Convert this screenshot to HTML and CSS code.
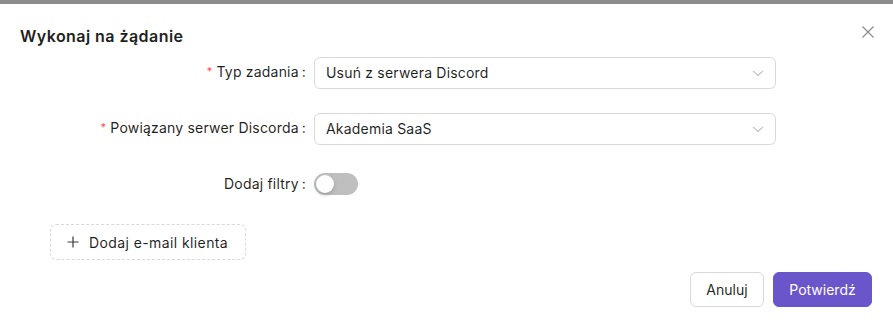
FILE: index.html
```html
<!DOCTYPE html>
<html lang="pl">
<head>
<meta charset="utf-8">
<title>Wykonaj na żądanie</title>
<link rel="stylesheet" href="styles.css">
</head>
<body>
<div class="strip"></div>
<div class="modal">
  <div class="header">
    <h2 class="title">Wykonaj na żądanie</h2>
    <button class="close" aria-label="Zamknij">
      <svg width="12" height="12" viewBox="0 0 12 12"><path d="M0.5 0.5 L11.5 11.5 M11.5 0.5 L0.5 11.5" stroke="#8c8c8c" stroke-width="1.2" fill="none"/></svg>
    </button>
  </div>
  <div class="form">
    <div class="row">
      <div class="label"><span class="req">*</span>Typ zadania<span class="colon">:</span></div>
      <div class="select"><span>Usuń z serwera Discord</span>
        <svg class="arrow" width="12" height="12" viewBox="0 0 12 12"><path d="M1 3.8 L6 8.5 L11 3.8" stroke="#bfbfbf" stroke-width="1.1" fill="none"/></svg>
      </div>
    </div>
    <div class="row">
      <div class="label"><span class="req">*</span>Powiązany serwer Discorda<span class="colon">:</span></div>
      <div class="select"><span>Akademia SaaS</span>
        <svg class="arrow" width="12" height="12" viewBox="0 0 12 12"><path d="M1 3.8 L6 8.5 L11 3.8" stroke="#bfbfbf" stroke-width="1.1" fill="none"/></svg>
      </div>
    </div>
    <div class="row">
      <div class="label">Dodaj filtry<span class="colon">:</span></div>
      <div class="ctrl"><span class="switch"><span class="knob"></span></span></div>
    </div>
    <button class="dashed">
      <svg width="12" height="12" viewBox="0 0 12 12"><path d="M6 0.5 V11.5 M0.5 6 H11.5" stroke="#3a3a3a" stroke-width="1.2" fill="none"/></svg>
      <span>Dodaj e-mail klienta</span>
    </button>
  </div>
  <div class="footer">
    <button class="btn cancel">Anuluj</button>
    <button class="btn primary">Potwierdź</button>
  </div>
</div>
</body>
</html>
```
FILE: styles.css
```css
* { box-sizing: border-box; }
html, body { margin: 0; padding: 0; background: #fff; }
body {
  font-family: "Inter", "Noto Sans", sans-serif;
  font-size: 14px;
  letter-spacing: 0.2px;
  color: rgba(0,0,0,0.88);
}
.strip { height: 4px; background: #8c8c8c; }
.modal { padding: 0 20px 14px 20px; }
.header {
  display: flex;
  justify-content: space-between;
  align-items: flex-start;
  padding-top: 20px;
}
.title {
  margin: 0;
  font-size: 16px;
  font-weight: 600;
  line-height: 24px;
  letter-spacing: 0.45px;
  color: #1f1f1f;
}
.close {
  border: 0; background: none; padding: 0;
  width: 12px; height: 12px;
  margin-top: 2px; margin-right: -1px;
  display: flex;
}
.form { margin-top: 8px; }
.row {
  display: grid;
  grid-template-columns: 294px 462px;
  align-items: center;
  height: 32px;
  margin-bottom: 24px;
}
.label {
  text-align: right;
  padding-right: 8px;
  white-space: nowrap;
  line-height: 32px;
}
.req {
  color: #ff4d4f;
  margin-right: 4px;
  font-size: 11px;
  position: relative;
  top: -2px;
}
.colon { margin-left: 3px; }
.select {
  height: 32px;
  border: 1px solid #d9d9d9;
  border-radius: 6px;
  padding: 0 11px;
  display: flex;
  align-items: center;
  justify-content: space-between;
}
.ctrl { display: flex; align-items: center; }
.switch {
  width: 44px; height: 22px;
  border-radius: 11px;
  background: #bfbfbf;
  display: flex; align-items: center;
  padding: 2px;
}
.knob {
  width: 18px; height: 18px;
  border-radius: 50%;
  background: #fff;
  box-shadow: 0 2px 4px rgba(0,35,11,0.2);
}
.dashed {
  margin-left: 30px;
  height: 36px;
  width: 196px;
  border: 1px dashed #d9d9d9;
  border-radius: 6px;
  background: #fff;
  display: flex;
  align-items: center;
  gap: 10px;
  padding: 0 16px;
  font: inherit;
  letter-spacing: 0.4px;
  color: rgba(0,0,0,0.88);
}
.footer {
  display: flex;
  justify-content: flex-end;
  gap: 9px;
  margin-top: 12px;
  padding-right: 1px;
}
.btn {
  height: 35px;
  padding: 0;
  border: 1px solid #d9d9d9;
  border-radius: 6px;
  background: #fff;
  font: inherit;
  color: rgba(0,0,0,0.88);
}
.btn.cancel { width: 74px; }
.btn.primary {
  width: 99px;
  background: #6b55cb;
  border-color: #6b55cb;
  color: #fff;
}
```
